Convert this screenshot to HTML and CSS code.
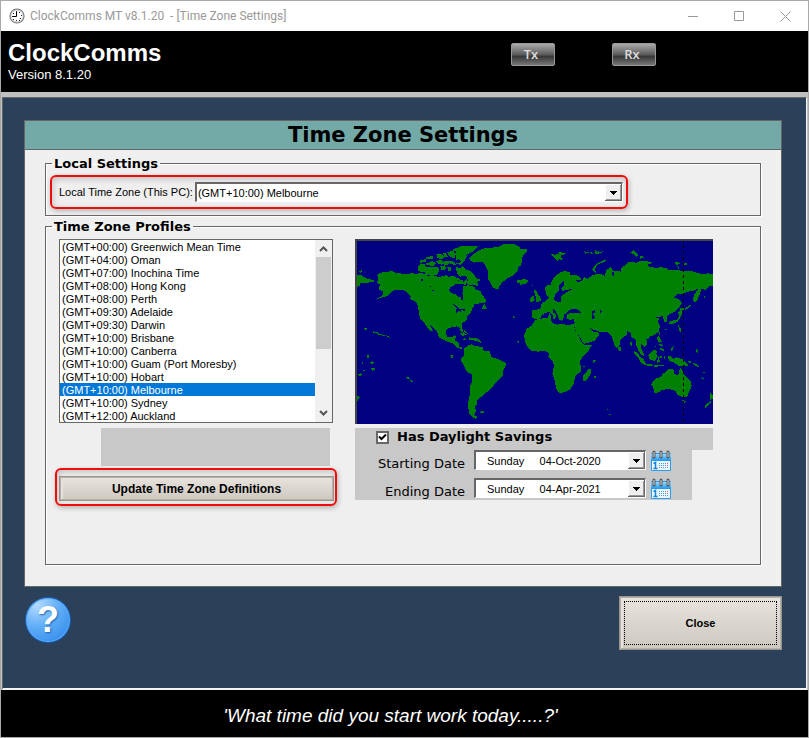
FILE: index.html
```html
<!DOCTYPE html>
<html lang="en">
<head>
  <meta charset="UTF-8">
  <meta name="viewport" content="width=device-width, initial-scale=1.0">
  <title>ClockComms MT v8.1.20 - [Time Zone Settings]</title>
  <link rel="stylesheet" href="styles.css">
</head>
<body>
  <div class="window">
    <div class="titlebar">
      <svg class="app-icon" viewBox="0 0 16 16" width="16" height="16" aria-hidden="true">
        <circle cx="8" cy="8" r="7.6" fill="#777"/>
        <circle cx="8" cy="8" r="6.6" fill="#ccc"/>
        <circle cx="8" cy="8" r="5.6" fill="#fff"/>
        <path d="M7 3h1v1H7zM10 4h1v1h-1zM4 5h1v1H4zM12 7h1v1h-1zM3 8h1v1H3zM11 10h1v1h-1zM4 11h1v1H4zM7 12h1v1H7zM10 12h1v1h-1z" fill="#223"/>
        <path d="M7.500 4v4.500H4" fill="none" stroke="#000" stroke-width="1"/>
      </svg>
      <span class="caption">ClockComms MT v8.1.20 &nbsp;- [Time Zone Settings]</span>
      <div class="win-buttons">
        <button aria-label="Minimize"><svg width="11" height="11" viewBox="0 0 11 11"><path d="M0 5.500h10"/></svg></button>
        <button aria-label="Maximize"><svg width="11" height="11" viewBox="0 0 11 11"><path d="M.5.5h9v9h-9z"/></svg></button>
        <button aria-label="Close window"><svg width="11" height="11" viewBox="0 0 11 11"><path d="M.5.5l10 10M10.500.5l-10 10"/></svg></button>
      </div>
    </div>

    <header class="header">
      <div class="brand">
        <h1>ClockComms</h1>
        <p>Version 8.1.20</p>
      </div>
      <div class="signals">
        <button class="signal">Tx</button>
        <button class="signal">Rx</button>
      </div>
    </header>

    <main class="workspace">
      <section class="panel">
        <h2>Time Zone Settings</h2>
        <div class="panel-body">
          <fieldset class="group local">
            <legend>Local Settings</legend>
            <div class="highlight local-row">
              <label for="localZone">Local Time Zone (This PC):</label>
              <select id="localZone" class="combo">
                <option>(GMT+10:00) Melbourne</option>
                <option>(GMT+10:00) Sydney</option>
              </select>
            </div>
          </fieldset>

          <fieldset class="group">
            <legend>Time Zone Profiles</legend>
            <div class="profiles">
              <div class="left-col">
                <div class="zone-box">
                  <select class="zone-list" size="14" aria-label="Time Zone Profiles">
                    <option>(GMT+00:00) Greenwich Mean Time</option>
                    <option>(GMT+04:00) Oman</option>
                    <option>(GMT+07:00) Inochina Time</option>
                    <option>(GMT+08:00) Hong Kong</option>
                    <option>(GMT+08:00) Perth</option>
                    <option>(GMT+09:30) Adelaide</option>
                    <option>(GMT+09:30) Darwin</option>
                    <option>(GMT+10:00) Brisbane</option>
                    <option>(GMT+10:00) Canberra</option>
                    <option>(GMT+10:00) Guam (Port Moresby)</option>
                    <option>(GMT+10:00) Hobart</option>
                    <option selected>(GMT+10:00) Melbourne</option>
                    <option>(GMT+10:00) Sydney</option>
                    <option>(GMT+12:00) Auckland</option>
                  </select>
                  <div class="scrollbar" aria-hidden="true">
                    <svg width="9" height="17" viewBox="0 0 9 17"><path d="M1 11l3.500-3.500L8 11"/></svg>
                    <div class="thumb"></div>
                    <svg width="9" height="17" viewBox="0 0 9 17"><path d="M1 6l3.500 3.500L8 6"/></svg>
                  </div>
                </div>
                <div class="status-box"></div>
                <div class="highlight update-row">
                  <button class="btn update">Update Time Zone Definitions</button>
                </div>
              </div>

              <div class="right-col">
                <svg class="map" viewBox="0 0 358 185" role="img" aria-label="World map">
                  <rect width="358" height="185" fill="#000080"/>
                  <!-- Americas and Pacific -->
                  <g transform="translate(-15 -9) scale(.33333)" fill="#008000">
                    <path d="M111 135L120 129 135 126 158 123 163 127 190 132 219 130 229 132 240 128 258 133 262 138 300 140 320 135 326 140 343 137 347 142 358 146 352 153 372 156 382 143 377 165 368 162 360 163 348 161 343 167 330 172 327 183 333 189 349 193 352 199 363 202 364 211 369 211 370 195 367 191 370 180 369 169 385 166 403 171 408 179 422 183 425 193 438 208 439 217 420 219 404 225 397 235 394 245 382 258 380 271 366 280 366 291 369 304 363 307 359 294 349 289 336 292 320 297 317 310 323 321 337 322 342 315 348 318 344 331 356 338 357 349 370 354 362 357 348 351 340 341 318 334 297 322 292 307 277 290 268 282 280 303 270 303 255 282 241 265 236 250 235 228 226 214 210 207 212 198 196 183 186 179 165 179 151 188 142 198 119 205 108 207 128 196 128 184 115 178 120 164 111 158 116 147Z"/>
                    <path d="M51 134L62 134 73 142 86 147 102 151 101 157 76 158 59 160 61 167 51 170ZM57 123l9-2 2 6-9 1z"/>
                    <path d="M233 112L240 102 254 103 258 110 270 112 292 110 298 117 293 133 280 137 258 136 255 126 234 124ZM238 92l20-5 0 8-18 4zM257 83l20-5 4 7-21 4zM258 101l18-8 13 6-8 8-22-1zM289 73l14-2 12 9-9 8-13-4zM306 68l11 0 7 12-8 2zM321 68l18-6 8 10-3 12-12-2zM288 94l14-5 10 8-5 7-13-2zM308 97l9-5 11 4-3 9-13-1zM325 94l10-2 10 5 2 8-17-3zM300 108l15-2 3 12-13 4zM322 111l10 1 3 9-11 4zM346 68l13-2 0 14 24-4-10 17-11 12-15-4 17-5-7-9-9 5z"/>
                    <path d="M337 60L360 49 388 47 413 49 410 55 398 66 383 72 378 78 358 80 354 68Z"/>
                    <path d="M347 111L363 114 369 108 378 119 394 124 405 136 407 144 422 149 412 157 414 168 405 166 386 164 375 155 386 151 379 140 370 137 360 140 351 130ZM357 148l12 2-1 10-9-3z"/>
                    <path d="M388 84L396 75 414 63 432 55 474 51 490 43 523 42 542 53 539 61 553 58 563 64 556 69 548 75 547 91 543 105 535 113 533 123 521 136 503 144 488 156 479 167 475 178 460 174 451 158 443 145 445 127 438 110 430 98 418 95 403 98 390 91Z"/>
                    <path d="M531 151l13-1 2-3 17 2 1 6-8 7-14 0-11-5zM427 232l6-10 5 9 5 7-17-1zM359 311l13-4 10 8-14 2zM371 324l11 4-12 2zM370 297l10 9 3 5-8-2zM386 322l18 2 12 3 8 7 0 12-4-10-16-4-17-3z"/>
                    <path d="M371 357L383 347 394 343 405 348 427 351 431 362 451 364 452 380 473 387 497 399 497 408 490 420 488 439 479 447 467 458 457 472 445 483 434 492 419 504 411 512 410 524 405 532 409 542 403 554 413 562 406 567 396 559 387 550 384 521 388 499 391 490 391 467 396 457 396 434 382 426 374 412 364 394 364 384 371 376Z"/>
                    <path d="M419 548l7-5 9 2-4 5zM331 376l7-2 1 10-6 2zM72 292l11 4-3 4-8-3zM99 304l13 3 8 6 14 1 0 3-16-1-9-6-10-2zM137 316l10 2 3 6-8-4zM81 376l6-1 1 8-6 0zM63 394l6 4 3 5-5-1zM91 397l6-4 5 6-5 5zM94 414l10 1 0 6-9 1zM53 433l10-4 3 6-8 4zM196 440l9 2 5 4-2 3-8-4zM210 450l6 1 5 6-8 0zM51 497l9 4-3 4-3 7-3 1zM516 260l6-1 6 5-6 2zM532 332l4 0 0 6-5-2zM69 419l5 0 0 3-5 0z"/>
                    <!-- inland water -->
                    <path d="M340 222l10 6 8 8 18 2-2 4-12-1 0 7-6-7-5 8-4-2 3-12-10-9zM242 148l8 0 0 4-8 0zM269 168l5 0 0 3-5 0zM275 179l6 0 0 3-6 0zM403 222l22-2-10 8-12 2z" fill="#000080"/>
                  </g>
                  <!-- Europe, Africa, Asia and Oceania -->
                  <g transform="translate(165 -9) scale(.33333)" fill="#008000">
                    <path d="M47 240L61 235 64 223 72 216 80 210 86 202 78 193 75 173 83 164 93 165 94 156 105 138 120 128 132 124 150 125 151 134 170 136 183 144 182 151 166 149 175 157 188 150 192 140 202 146 216 137 231 132 249 134 255 139 258 121 272 112 279 121 275 133 284 142 280 124 294 122 304 127 303 115 318 103 327 96 351 98 362 92 388 95 399 98 380 105 391 111 414 114 422 111 440 115 447 121 470 120 490 123 510 122 538 130 547 133 564 130 579 132 579 168 570 168 558 180 545 177 540 190 533 209 525 218 519 210 522 193 533 180 533 176 517 184 508 184 491 190 472 193 460 204 476 206 486 221 479 229 468 243 451 251 441 258 442 274 433 277 429 259 411 261 407 264 420 266 413 273 419 285 418 304 403 315 384 322 376 321 379 329 383 343 373 351 363 340 362 354 371 369 373 379 362 373 354 359 348 344 348 331 340 325 333 319 331 306 322 304 321 314 311 320 300 331 298 350 288 354 280 336 275 319 262 306 240 306 215 297 209 294 219 306 235 307 237 316 223 333 201 339 192 342 181 324 169 306 163 289 163 279 163 267 149 270 139 264 141 252 148 248 142 249 132 253 131 263 125 274 117 268 112 253 105 241 99 237 99 247 109 254 108 263 101 270 98 255 89 245 77 249 67 253 61 265 49 268 37 263 36 241Z"/>
                    <path d="M46 270L68 265 91 262 96 278 113 284 128 281 144 286 161 281 165 300 176 318 184 335 194 346 215 346 206 361 190 379 180 392 184 423 166 438 162 460 150 479 132 487 120 489 110 480 104 452 97 431 102 407 98 394 85 379 87 370 75 362 55 365 35 363 23 351 14 334 13 314 20 296 35 287Z"/>
                    <path d="M30 208l5-9 7-1 2 11-5 8-7 0zM41 183l7-5 5 13 6 9 5 6-2 8-16 2 3-6-3-14zM0 57l20 0 2 5-9 9-8 9-2 27-3 2zM0 150l16-2 6 7-9 8-13 1zM90 71l13 1-1 5 10-6 12 5-2 7 9 2-8 5-5-4-5 7-11-9zM113 67l25 1-2 5-17 2zM193 64l14 3-11 4zM211 66l12 3-10 3zM226 60l7 6 3-4 3 5 12-4-5 5-14 4-9-2zM217 119l4-9 12-11 18-8 11-3-7 8-17 5-9 8-4 10 4 11zM328 69l13-8 7 8 8 8-8 4-8-10zM358 80l9-4 5 8-12 2zM463 98l9-3 10 6-13 4zM492 100l8 0 0 5-7 0zM472 108l8 6-5 4zM36 166l5-1-2 6z"/>
                    <path d="M445 279l10-7 15-2 8-11-4-11 8-8 5 8-7 17-7 10-15 7-9 2zM480 236l9-3 5 4-12 7zM494 236l11-8 11-5-6 8-14 9zM474 283l8 12 3 12-6-4-4-13zM434 297l7-1-2 7zM378 322l8-3 1 8-8 1zM415 309l6-5-3 12zM294 352l8 0 2 9-6 3-4-6zM190 434l10-8 6-11 6 2 0 15-11 18-10 5-3-12zM217 393l8-5 3 4-8 6zM189 407l6 3-3 4zM222 438l5-1 0 6-5 0z"/>
                    <path d="M341 362l10 5 11 15 8 4 8 15 21 3 0 5-21-3-13-6-9-14-13-13zM384 375l18-15 9 3-2 9 5 7-10 14-15-4zM414 381l11-3 0 5-9 3 5 9-10 3zM402 405l33 0-8 4-25 1zM431 377l6 0-2 10-4-2zM445 378l11 2 3 7 11-5 17 6 16 14 3 9-14-6-10 4-8-2-12-10-16-5zM409 321l8-2 8 16-7 4-6-10zM417 342l15 3-9 5zM421 354l12 4-2 6-11-5zM402 355l9-12-5 10zM453 355l8-7-2 12-5 2zM503 393l12 2-6 5zM514 398l16 4 9 9-8-1z"/>
                    <path d="M397 455L410 445 422 440 430 430 440 424 446 418 456 417 464 422 462 431 474 437 480 414 487 420 491 433 501 444 513 454 515 468 507 487 501 500 487 501 472 494 467 483 447 477 426 480 414 488 403 490 400 473 394 463Z"/>
                    <path d="M486 509l13 5-4 5-7-3zM569 487l7 5 3 8 0 6-8 3-1-10zM554 526l11-8 9-6 1 5-12 12-9 5zM529 357l7 5-2 8-5-5zM549 425l8 4-6 2zM543 441l11 6-7 1zM262 537l5 3-3 3zM267 550l8 3-4 4-5-2zM331 337l6 0-2 11-4-3zM550 197l8 5-6 1zM86 246l7 12 0 5-8 2 1-10zM66 252l7-2-2 5z"/>
                    <!-- Baltic, Caspian and Black seas -->
                    <path d="M104 193l-1 15 5 6 15 2 0-16 8-8 9-5 18-9-20 1-12 6-2-9 9-12-2-10-15 14 0 15zM215 243l10-2 0 6-7 3 4 9 3 6-9 2 1-14zM241 241l5 2-3 7-3-3zM143 243l14-6 12 0 12 6 1 5-20 1-20 2zM105 264l8 8 12 4 12 5 8-7 20 1-3 7-29-1-29-3z" fill="#000080"/>
                  </g>
                  <path d="M328.500 0v185" fill="none" stroke="#000" stroke-dasharray="3 3"/>
                  <path d="M1 185V1h357" fill="none" stroke="#444" stroke-width="2"/>
                </svg>
                <div class="daylight">
                  <input type="checkbox" id="daylight" checked>
                  <label for="daylight">Has Daylight Savings</label>
                </div>
                <div class="dates">
                  <label for="startDate">Starting Date</label>
                  <select id="startDate" class="combo">
                    <option>Sunday &nbsp; &nbsp; 04-Oct-2020</option>
                  </select>
                  <button class="calendar" aria-label="Pick starting date">
                    <svg width="22" height="22" viewBox="0 0 22 22"><use href="#cal"/></svg>
                  </button>
                  <label for="endDate">Ending Date</label>
                  <select id="endDate" class="combo">
                    <option>Sunday &nbsp; &nbsp; 04-Apr-2021</option>
                  </select>
                  <button class="calendar" aria-label="Pick ending date">
                    <svg width="22" height="22" viewBox="0 0 22 22"><use href="#cal"/></svg>
                  </button>
                </div>
              </div>
            </div>
          </fieldset>
        </div>
      </section>

      <div class="actions">
        <button class="help" aria-label="Help">?</button>
        <button class="btn close">Close</button>
      </div>
    </main>

    <footer class="footer">'What time did you start work today.....?'</footer>
  </div>

  <svg width="0" height="0" class="sprite" aria-hidden="true">
    <defs>
      <linearGradient id="calTop" x2="0" y2="1">
        <stop offset="0" stop-color="#9bd9ff"/>
        <stop offset="1" stop-color="#1b93ee"/>
      </linearGradient>
      <symbol id="cal" viewBox="0 0 22 22">
        <path d="M1.500 3.500h19v17h-19z" fill="#e8f6ff" stroke="#2a9df0"/>
        <path d="M1 4h20v7H1z" fill="url(#calTop)"/>
        <path d="M4 2v5M11 2v5M18 2v5" stroke="#555" stroke-width="3" stroke-linecap="round"/>
        <path d="M4 2v5M11 2v5M18 2v5" stroke="#ddd"/>
        <path d="M3.500 13.500l2-1V18M3.500 18.500h4" fill="none" stroke="#1583dd" stroke-width="1.500"/>
        <path d="M9 13.500h10M9 15.500h10M9 17.500h10" stroke="#5599cc" stroke-dasharray="1 1"/>
        <path d="M17 13.500h1M17 15.500h1" stroke="#e55"/>
      </symbol>
    </defs>
  </svg>
</body>
</html>
```

FILE: styles.css
```css
* {
  box-sizing: border-box;
}

body {
  margin: 0;
  font-family: "Liberation Sans", Arial, sans-serif;
  font-size: 11px;
  color: #000;
}

button, select, input {
  font: inherit;
  color: inherit;
  margin: 0;
}

h1, h2, p {
  margin: 0;
}

.sprite {
  position: absolute;
}

.window {
  display: flex;
  flex-direction: column;
  min-height: 100vh;
  border: 1px solid #a9a9a9;
  background: #c0c0c0;
}

.titlebar {
  display: flex;
  align-items: center;
  height: 30px;
  padding-left: 8px;
  background: #fff;
}

.caption {
  margin-left: 5px;
  font: 12px Roboto, "Open Sans", sans-serif;
  color: #999;
}

.win-buttons {
  display: flex;
  margin-left: auto;
}

.win-buttons button {
  display: flex;
  align-items: center;
  justify-content: center;
  width: 46px;
  height: 28px;
  padding: 0;
  border: none;
  background: none;
}

.win-buttons path {
  fill: none;
  stroke: #999;
}

.header {
  display: flex;
  justify-content: space-between;
  height: 61px;
  padding: 8px 152px 0 7px;
  background: #000;
  color: #fff;
}

.brand h1 {
  font-size: 24px;
  line-height: 28px;
}

.brand p {
  font-size: 13px;
  line-height: 16px;
}

.signals {
  display: flex;
  gap: 57px;
  padding-top: 4px;
}

.signal {
  width: 44px;
  height: 23px;
  padding: 0 4px 2px 0;
  border: 1px solid #999;
  border-radius: 2px;
  background: linear-gradient(#aaa, #606060 48%, #383838 60%, #777);
  font: 600 13px "Open Sans", sans-serif;
  line-height: 18px;
  color: #ddd;
}

.workspace {
  flex: 1;
  margin: 5px 1px 0 1px;
  padding: 22px 24px 0 21px;
  border: solid #f4f4f4;
  border-width: 1px 1px 2px;
  border-top-color: #666;
  border-left-color: #666;
  background: #2a4159;
}

.panel {
  border: 1px solid #666;
  background: #efefef;
}

.panel h2 {
  border-bottom: 1px solid #666;
  background: #73a9a7;
  font: bold 21px "DejaVu Sans", Verdana, sans-serif;
  line-height: 28px;
  text-align: center;
}

.panel-body {
  padding: 6px 20px 21px;
}

.group {
  min-width: 0;
  margin: 0;
  padding: 0;
  border: 1px solid #666;
  box-shadow: inset 1px 1px #fff, 1px 1px #fff;
}

.group legend {
  margin-left: 6px;
  padding: 0 2px;
  font: bold 13px "DejaVu Sans", Verdana, sans-serif;
  line-height: 15px;
}

.highlight {
  border: 2px solid #f00c0c;
  border-radius: 6px;
  box-shadow: 1px 2px 5px rgba(0, 0, 0, 0.25), inset 1px 2px 6px rgba(0, 0, 0, 0.2);
}

.local {
  margin-bottom: 3px;
}

.local-row {
  display: flex;
  align-items: center;
  width: 81%;
  height: 34px;
  margin: 4px 0 6px 4px;
  padding: 0 3px 0 7px;
}

.local-row label {
  white-space: nowrap;
  margin-right: 2px;
}

.combo {
  flex: 1;
  min-width: 0;
  height: 20px;
  padding: 0 20px 0 1px;
  border: 1px solid #fff;
  border-top: 2px solid #666;
  border-left: 2px solid #666;
  border-radius: 0;
  outline: none;
  appearance: none;
  background: #fff url("data:image/svg+xml,%3Csvg xmlns='http://www.w3.org/2000/svg' width='17' height='17'%3E%3Cpath d='M0 0h17v17H0z' fill='%23666'/%3E%3Cpath d='M0 0h16v16H0z' fill='%23fff'/%3E%3Cpath d='M1 1h15v15H1z' fill='%23999'/%3E%3Cpath d='M1 1h14v14H1z' fill='%23efefef'/%3E%3Cpath d='M5 7h7v1h-1v1h-1v1H9v1H8v-1H7V9H6V8H5z'/%3E%3C/svg%3E") right center no-repeat;
}

.profiles {
  display: flex;
  gap: 22px;
  align-items: flex-start;
  padding: 5px 0 58px 9px;
}

.left-col {
  width: 278px;
}

.zone-box {
  display: flex;
  width: 274px;
  height: 184px;
  margin-left: 4px;
  border: 1px solid #666;
  background: #fff;
}

.zone-list {
  flex: 1;
  min-width: 0;
  margin: 0;
  padding: 0;
  border: none;
  border-radius: 0;
  outline: none;
  background: #fff;
}

.zone-list option {
  min-height: 13px;
  height: 13px;
  padding: 1px 2px 0;
  line-height: 13px;
}

.zone-list option:checked {
  background: #0078d7 linear-gradient(#0078d7, #0078d7);
  color: #fff;
  -webkit-text-fill-color: #fff;
}

.scrollbar {
  display: flex;
  flex-direction: column;
  align-items: center;
  width: 17px;
  background: #f0f0f0;
}

.scrollbar path {
  fill: none;
  stroke: #555;
  stroke-width: 2;
}

.thumb {
  width: 15px;
  height: 92px;
  margin-bottom: auto;
  background: #cdcdcd;
}

.status-box {
  height: 38px;
  margin: 5px 3px 2px 46px;
  background: #c8c8c8;
}

.update-row {
  width: 282px;
  height: 38px;
  padding: 6px 1px 4px 2px;
}

.btn {
  border: 1px solid #99958c;
  box-shadow: inset 0 0 0 1px #b5b1a8, inset 3px 2px #e6e2db;
  background: linear-gradient(#e8e4de, #cdc8c0);
  font-weight: bold;
}

.update {
  display: block;
  width: 100%;
  height: 25px;
  padding: 0;
  font-size: 12px;
}

.right-col {
  width: 358px;
}

.map {
  display: block;
  width: 100%;
  margin-bottom: 4px;
  shape-rendering: crispEdges;
}

.daylight {
  display: flex;
  align-items: center;
  height: 22px;
  padding: 0 0 4px 21px;
  background: #c8c8c8;
}

.daylight label {
  margin-left: 8px;
  font: bold 13px "DejaVu Sans", Verdana, sans-serif;
  line-height: 16px;
}

.daylight input {
  width: 13px;
  height: 13px;
  border: 2px solid #666;
  appearance: none;
  background: #fff;
}

.daylight input:checked {
  background: #fff url("data:image/svg+xml,%3Csvg xmlns='http://www.w3.org/2000/svg' width='9' height='9'%3E%3Cpath d='M1 3.500l2.500 2.500L8 1.500' fill='none' stroke='%23000' stroke-width='2'/%3E%3C/svg%3E") center no-repeat;
}

.dates {
  display: grid;
  grid-template-columns: 110px 172px 22px;
  column-gap: 4px;
  row-gap: 6px;
  align-items: start;
  width: 337px;
  padding-left: 5px;
  background: #c8c8c8;
}

.dates .combo {
  padding-left: 11px;
}

.dates label {
  padding: 6px 5px 0 0;
  font: 13px "DejaVu Sans", Verdana, sans-serif;
  line-height: 16px;
  text-align: right;
}

.calendar {
  display: block;
  height: 22px;
  padding: 0;
  border: none;
  background: none;
}

.calendar svg {
  display: block;
}

.actions {
  display: flex;
  justify-content: space-between;
  align-items: flex-start;
  padding-top: 9px;
}

.help {
  width: 46px;
  height: 46px;
  margin: 1px 0 0 1px;
  padding: 0;
  border: 1px solid #1560bd;
  border-radius: 50%;
  box-shadow: inset 0 0 0 1px #62adf5;
  background: radial-gradient(circle at 25% 15%, #b4dcff, #60adf7 45%, #2583e8);
  font: bold 36px "Liberation Sans", Arial, sans-serif;
  line-height: 44px;
  color: #fff;
  text-shadow: 1px 1px 2px #1767b5;
}

.close {
  width: 163px;
  height: 54px;
  outline: 1px dotted #000;
  outline-offset: -6px;
}

.footer {
  height: 47px;
  padding-right: 28px;
  background: #000;
  color: #fff;
  font-size: 19px;
  font-style: italic;
  line-height: 51px;
  text-align: center;
}
```
